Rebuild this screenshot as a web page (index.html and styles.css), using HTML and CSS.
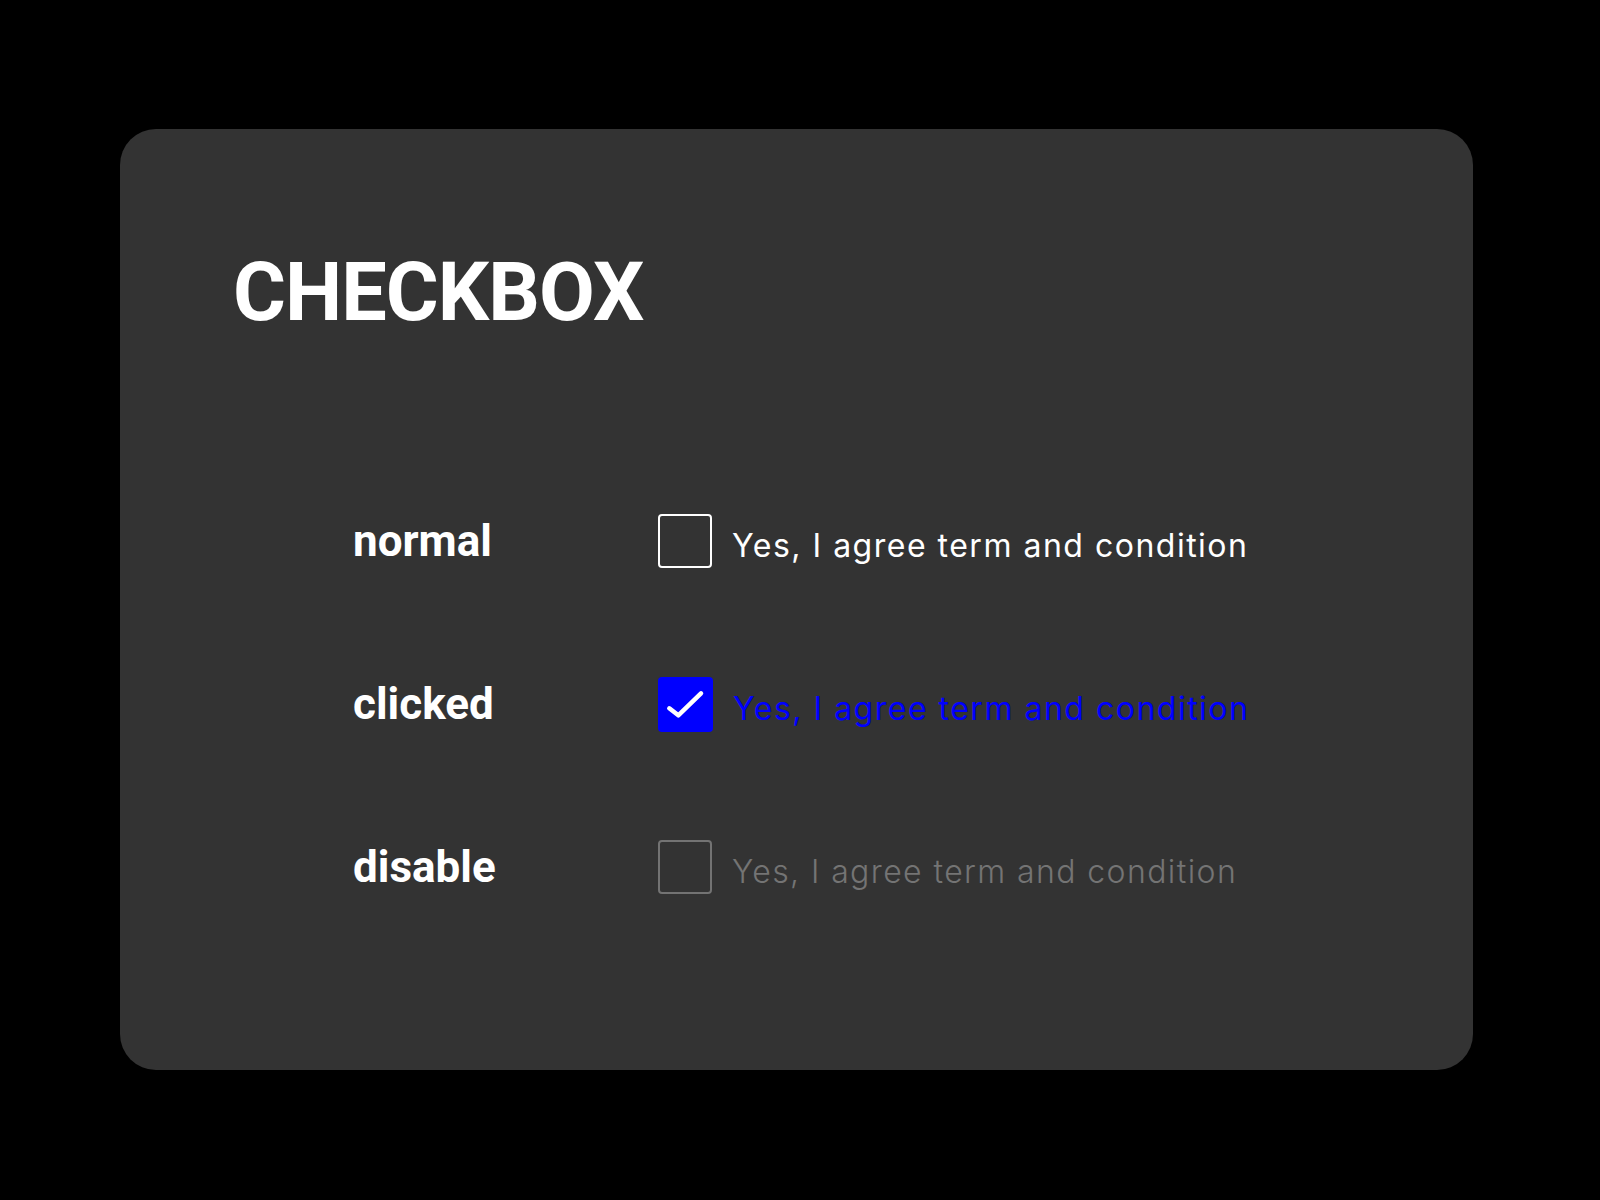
FILE: index.html
```html
<!DOCTYPE html>
<html lang="en">
<head>
<meta charset="utf-8">
<title>Checkbox</title>
<link rel="stylesheet" href="styles.css">
</head>
<body>
<main class="card">
  <h1 class="title">CHECKBOX</h1>
  <div class="rows">
    <div class="row">
      <span class="label">normal</span>
      <span class="box"></span>
      <span class="text">Yes, I agree term and condition</span>
    </div>
    <div class="row row-checked">
      <span class="label">clicked</span>
      <span class="box box-checked">
        <svg viewBox="0 0 55 55" width="55" height="55"><path d="M11.3 31.3 L20.3 38.3 L43 16.3" fill="none" stroke="#fff" stroke-width="4.5" stroke-linecap="round" stroke-linejoin="round"/></svg>
      </span>
      <span class="text">Yes, I agree term and condition</span>
    </div>
    <div class="row row-disabled">
      <span class="label">disable</span>
      <span class="box"></span>
      <span class="text">Yes, I agree term and condition</span>
    </div>
  </div>
</main>
</body>
</html>
```
FILE: styles.css
```css
html, body {
  margin: 0;
  padding: 0;
  background: #000;
}
body {
  width: 1600px;
  height: 1200px;
  padding: 129px 0 0 120px;
  box-sizing: border-box;
}
.card {
  width: 1353px;
  height: 941px;
  box-sizing: border-box;
  background: #333333;
  border-radius: 36px;
  padding: 123px 0 0 113px;
}
.title {
  margin: 0;
  font-family: Roboto, "Liberation Sans", sans-serif;
  font-weight: 700;
  font-size: 81px;
  line-height: 82px;
  color: #fff;
  letter-spacing: -1px;
}
.rows {
  margin-top: 180px;
  padding-left: 120px;
  display: flex;
  flex-direction: column;
  gap: 109px;
}
.row {
  display: flex;
  align-items: center;
  height: 54px;
}
.label {
  width: 305px;
  font-family: Roboto, "Liberation Sans", sans-serif;
  font-weight: 700;
  font-size: 44px;
  color: #fff;
}
.box {
  width: 54px;
  height: 54px;
  box-sizing: border-box;
  border: 2px solid #fff;
  border-radius: 4px;
  flex: none;
  display: flex;
}
.box-checked {
  border: none;
  background: #0000ff;
  width: 55px;
  height: 55px;
}
.text {
  margin-left: 20px;
  padding-top: 8px;
  font-family: Inter, "Open Sans", sans-serif;
  font-size: 32px;
  letter-spacing: 1.5px;
  color: #fff;
}
.row-checked .text {
  color: #0000ff;
}
.row-disabled .box {
  border-color: #737373;
}
.row-disabled .text {
  color: #747474;
  font-weight: 300;
  letter-spacing: 1.4px;
}
```
